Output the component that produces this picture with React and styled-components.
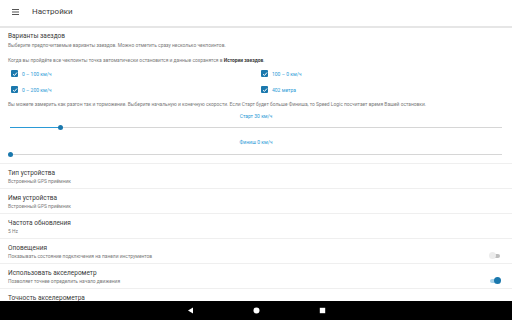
import React from 'react';
import styled, { createGlobalStyle } from 'styled-components';

const colors = {
  text: '#3a3a3a',
  sub: '#7a7a7a',
  accent: '#2b9ad6',
  accentDark: '#1a78ad',
  divider: '#efefef',
  track: '#d6d6d6',
};

const Global = createGlobalStyle`
  html, body { margin: 0; padding: 0; background: #fff; }
  body { font-family: Roboto, "Noto Sans", sans-serif; color: ${colors.text}; }
  * { box-sizing: border-box; }
`;

const Screen = styled.div`
  width: 512px;
  height: 320px;
  display: flex;
  flex-direction: column;
  overflow: hidden;
  background: #fff;
`;

const Toolbar = styled.header`
  height: 28px;
  flex: none;
  display: flex;
  align-items: center;
  gap: 13px;
  padding: 0 0 2px 12px;
  background: #fff;
  border-bottom: 2px solid #e6e6e6;
`;

const Title = styled.div`
  font-size: 8px;
  line-height: 10px;
  color: ${colors.text};
`;

const Content = styled.div`
  flex: 1;
  overflow: hidden;
  display: flex;
  flex-direction: column;
`;

const Section = styled.section`
  padding: 4px 8px 3px;
  border-bottom: 1px solid ${colors.divider};
`;

const ItemTitle = styled.div`
  font-size: 6.5px;
  line-height: 9px;
  color: ${colors.text};
`;

const Summary = styled.div`
  font-size: 4.9px;
  line-height: 7px;
  color: ${colors.sub};
  margin-top: ${(p) => p.$top || 0}px;
`;

const Note = styled.div`
  font-size: 4.9px;
  line-height: 7px;
  color: ${colors.sub};
  margin-top: ${(p) => p.$top || 0}px;
  b { color: ${colors.text}; font-weight: 700; }
`;

const CheckGrid = styled.div`
  display: grid;
  grid-template-columns: 250px 1fr;
  row-gap: 9px;
  padding-left: 3px;
  margin-top: 6px;
`;

const CheckRow = styled.label`
  display: flex;
  align-items: center;
  gap: 4px;
  height: 7px;
  font-size: 5px;
  color: ${colors.accent};
`;

const Box = styled.span`
  width: 7px;
  height: 7px;
  border-radius: 1px;
  background: ${colors.accentDark};
  display: flex;
  align-items: center;
  justify-content: center;
`;

const SliderLabel = styled.div`
  text-align: center;
  font-size: 5px;
  line-height: 7px;
  color: ${colors.accent};
  margin-top: ${(p) => p.$top || 0}px;
`;

const SliderRow = styled.div`
  height: 12px;
  display: flex;
  align-items: center;
  padding: 0 2px;
  margin-top: ${(p) => p.$top || 0}px;
`;

const Track = styled.div`
  position: relative;
  flex: 1;
  height: 1px;
  background: ${colors.track};
`;

const Fill = styled.div`
  position: absolute;
  left: 0;
  top: 0;
  height: 1px;
  background: ${colors.accent};
`;

const Thumb = styled.div`
  position: absolute;
  top: -2px;
  width: 5px;
  height: 5px;
  margin-left: -2.5px;
  border-radius: 50%;
  background: ${colors.accentDark};
`;

const Pref = styled.div`
  height: 25px;
  flex: none;
  display: flex;
  align-items: ${(p) => (p.$partial ? 'flex-start' : 'center')};
  justify-content: space-between;
  padding: ${(p) => (p.$partial ? '4px 12px 0 8px' : '0 12px 0 8px')};
  border-bottom: 1px solid ${colors.divider};
`;

const PrefText = styled.div`
  display: flex;
  flex-direction: column;
  padding-top: 1px;
`;

const Switch = styled.div`
  position: relative;
  width: 10px;
  height: 4px;
  margin-top: 9px;
  border-radius: 2px;
  background: ${(p) => (p.$on ? '#a9d3ea' : '#bdbdbd')};
`;

const Knob = styled.div`
  position: absolute;
  top: -1.5px;
  left: ${(p) => (p.$on ? '4px' : '-1px')};
  width: 7px;
  height: 7px;
  border-radius: 50%;
  background: ${(p) => (p.$on ? colors.accentDark : '#ececec')};
`;

const NavBar = styled.nav`
  height: 19px;
  flex: none;
  background: #000;
  display: flex;
  align-items: center;
  justify-content: center;
  gap: 59px;
`;

const Slider = ({ value, top }) => (
  <SliderRow $top={top}>
    <Track>
      <Fill style={{ width: `${value}%` }} />
      <Thumb style={{ left: `${value}%` }} />
    </Track>
  </SliderRow>
);

const Check = ({ children }) => (
  <CheckRow>
    <Box>
      <svg width="6" height="6" viewBox="0 0 6 6">
        <path d="M1 3.2 L2.4 4.5 L5 1.5" stroke="#fff" strokeWidth="1" fill="none" />
      </svg>
    </Box>
    {children}
  </CheckRow>
);

const prefs = [
  { title: 'Тип устройства', summary: 'Встроенный GPS приёмник' },
  { title: 'Имя устройства', summary: 'Встроенный GPS приёмник' },
  { title: 'Частота обновления', summary: '5 Hz' },
  { title: 'Оповещения', summary: 'Показывать состояние подключения на панели инструментов', sw: 'off' },
  { title: 'Использовать акселерометр', summary: 'Позволяет точнее определить начало движения', sw: 'on' },
];

const App = () => (
  <Screen>
    <Global />
    <Toolbar>
      <svg width="7" height="6" viewBox="0 0 7 6">
        <rect x="0" y="0" width="7" height="1" fill="#555" />
        <rect x="0" y="2.5" width="7" height="1" fill="#555" />
        <rect x="0" y="5" width="7" height="1" fill="#555" />
      </svg>
      <Title>Настройки</Title>
    </Toolbar>
    <Content>
      <Section>
        <ItemTitle>Варианты заездов</ItemTitle>
        <Summary $top={1}>Выберите предпочитаемые варианты заездов. Можно отметить сразу несколько чекпоинтов.</Summary>
        <Note $top={8}>
          Когда вы пройдёте все чекпоинты точка автоматически остановится и данные сохранятся в <b>Истории заездов</b>.
        </Note>
        <CheckGrid>
          <Check>0 – 100 км/ч</Check>
          <Check>100 – 0 км/ч</Check>
          <Check>0 – 200 км/ч</Check>
          <Check>402 метра</Check>
        </CheckGrid>
        <Note $top={8}>
          Вы можете замерить как разгон так и торможение. Выберите начальную и конечную скорости. Если Старт будет больше Финиша, то Speed Logic посчитает время Вашей остановки.
        </Note>
        <SliderLabel $top={5}>Старт 30 км/ч</SliderLabel>
        <Slider value={10.2} top={1} />
        <SliderLabel $top={6}>Финиш 0 км/ч</SliderLabel>
        <Slider value={0} top={2} />
      </Section>
      {prefs.map((p) => (
        <Pref key={p.title}>
          <PrefText>
            <ItemTitle>{p.title}</ItemTitle>
            <Summary>{p.summary}</Summary>
          </PrefText>
          {p.sw && (
            <Switch $on={p.sw === 'on'}>
              <Knob $on={p.sw === 'on'} />
            </Switch>
          )}
        </Pref>
      ))}
      <Pref $partial>
        <PrefText>
          <ItemTitle>Точность акселерометра</ItemTitle>
        </PrefText>
      </Pref>
    </Content>
    <NavBar>
      <svg width="7" height="7" viewBox="0 0 7 7">
        <path d="M1 3.5 L6 0.5 L6 6.5 Z" fill="#fff" />
      </svg>
      <svg width="7" height="7" viewBox="0 0 7 7">
        <circle cx="3.5" cy="3.5" r="3" fill="#fff" />
      </svg>
      <svg width="7" height="7" viewBox="0 0 7 7">
        <rect x="0.8" y="0.8" width="5.4" height="5.4" fill="#fff" />
      </svg>
    </NavBar>
  </Screen>
);

export default App;
